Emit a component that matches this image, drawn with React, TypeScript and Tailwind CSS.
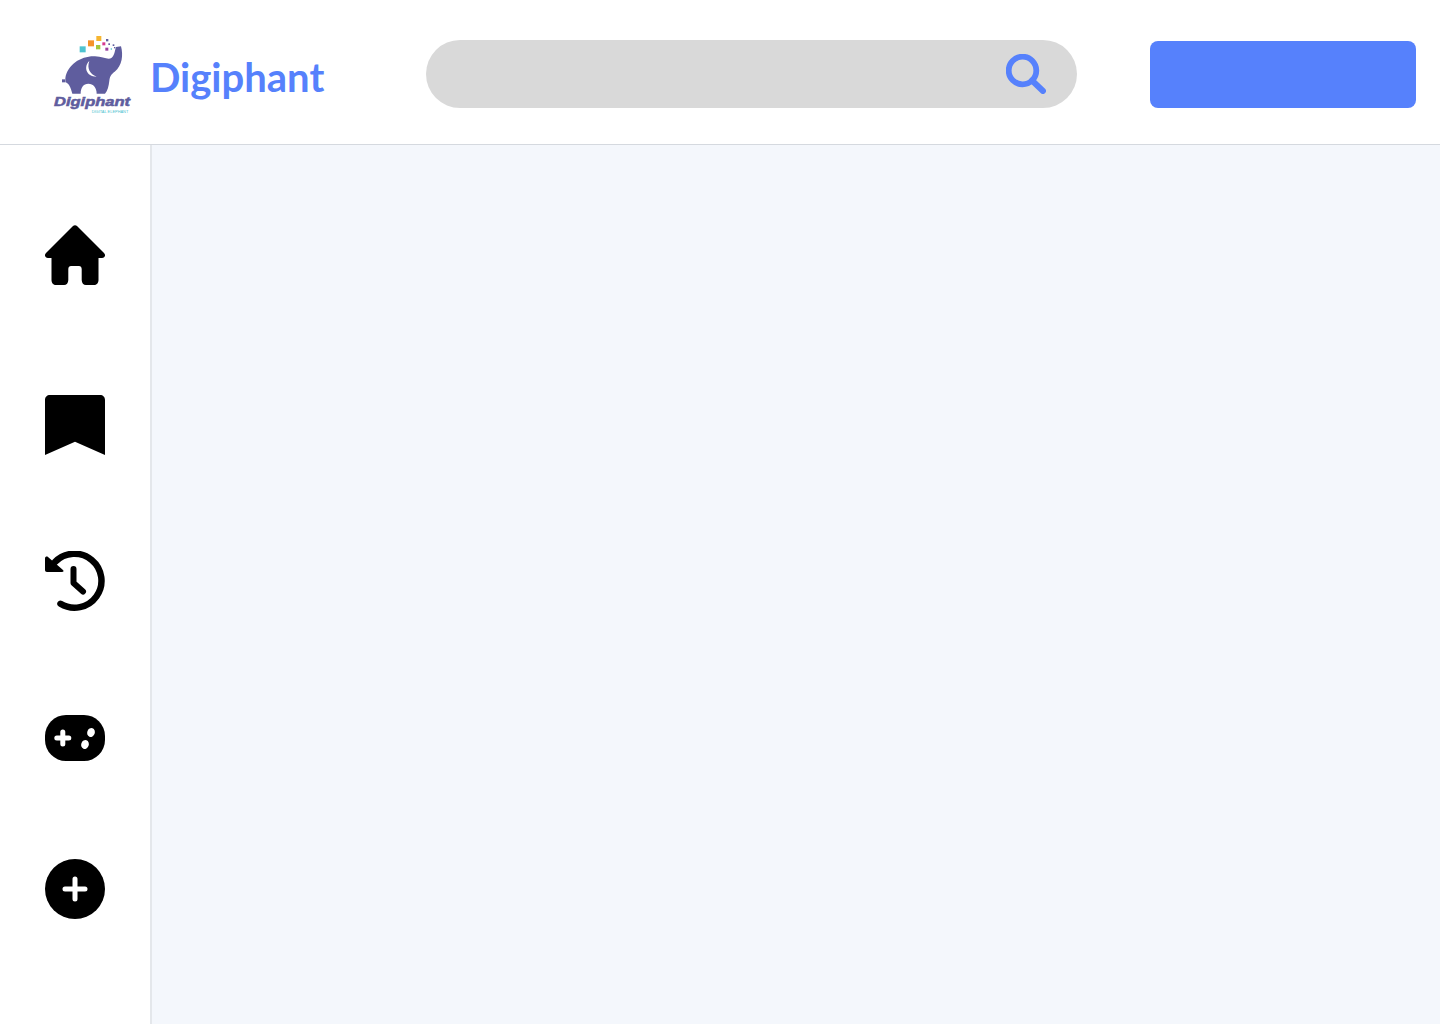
function Logo() {
  return (
    <svg viewBox="0 0 330 285" className="w-[110px] h-[95px] shrink-0">
      <rect x="119" y="64" width="18" height="18" fill="#4fc3d0" />
      <rect x="144" y="46" width="18" height="18" fill="#f5922a" />
      <rect x="169" y="33" width="15" height="15" fill="#f6b530" />
      <rect x="168" y="60" width="13" height="13" fill="#a5c63b" />
      <rect x="198" y="42" width="7" height="7" fill="#5f5d9e" />
      <rect x="187" y="52" width="9" height="9" fill="#d6398f" />
      <rect x="196" y="68" width="9" height="9" fill="#9b3fa0" />
      <rect x="205" y="55" width="5" height="5" fill="#5f5d9e" />
      <rect x="218" y="58" width="5" height="5" fill="#5f5d9e" />
      <rect x="212" y="70" width="4" height="4" fill="#4fc3d0" />
      <rect x="222" y="66" width="4" height="4" fill="#5f5d9e" />
      <rect x="66" y="163" width="9" height="9" fill="#5f5d9e" />
      <path
        d="M76 160C82 118 125 92 165 94C190 95 205 106 215 98C224 91 224 78 228 66L243 64C250 90 247 122 224 140C215 147 210 152 208 167C206 184 203 197 195 206L170 206C170 188 160 176 145 176C130 176 122 188 122 206L97 206C92 188 88 176 76 172Z"
        fill="#5f5d9e"
      />
      <path d="M148 108C130 125 138 155 170 155C150 148 140 130 148 108Z" fill="#ffffff" />
      <text
        x="42"
        y="242"
        textLength="228"
        lengthAdjust="spacingAndGlyphs"
        fontFamily="Liberation Sans, sans-serif"
        fontWeight="700"
        fontStyle="italic"
        fontSize="36"
        stroke="#5f5d9e"
        strokeWidth="1.5"
        fill="#5f5d9e"
      >
        Digiphant
      </text>
      <text
        x="155"
        y="263"
        textLength="110"
        lengthAdjust="spacingAndGlyphs"
        fontFamily="Liberation Sans, sans-serif"
        fontSize="8"
        fill="#4fc3d0"
      >
        DIGITAL ELEPHANT
      </text>
    </svg>
  );
}

function SearchIcon() {
  return (
    <svg viewBox="0 0 40 40" className="w-10 h-10" fill="none" stroke="#5681fc">
      <circle cx="16.500" cy="16.500" r="13.800" strokeWidth="5.800" />
      <path d="M26 26.500L37 37" strokeWidth="6" strokeLinecap="round" />
    </svg>
  );
}

function HomeIcon() {
  return (
    <svg viewBox="0 0 60 60" className="w-[60px] h-[60px] block">
      <path d="M28 1C29 0 31 0 32 1L59 28C61 30 60 33 57 33H53.500V55C53.500 58 51.500 60 49 60H41C38.500 60 36.700 58 36.700 55V44C36.700 42 35.500 41 34 41H26C24.500 41 23.300 42 23.300 44V55C23.300 58 21.500 60 19 60H11C8.500 60 6.500 58 6.500 55V33H3C0 33 -1 30 1 28Z" />
    </svg>
  );
}

function BookmarkIcon() {
  return (
    <svg viewBox="0 0 60 60" className="w-[60px] h-[60px] block">
      <path d="M5 0H55C58 0 60 2 60 5V60L30 46.700L0 60V5C0 2 2 0 5 0Z" />
    </svg>
  );
}

function HistoryIcon() {
  return (
    <svg viewBox="0 0 60 60" className="w-[60px] h-[60px] block">
      <path
        d="M10 11A27 27 0 1 1 15.500 52.800"
        fill="none"
        stroke="#000"
        strokeWidth="6.500"
        strokeLinecap="round"
      />
      <path d="M0 7.500C0 5.500 2 5 3 6L18 19C19 20 18.500 21 17 21H2C0.800 21 0 20 0 19Z" />
      <path
        d="M28.500 18V32L38 40.500"
        fill="none"
        stroke="#000"
        strokeWidth="6"
        strokeLinecap="round"
        strokeLinejoin="round"
      />
    </svg>
  );
}

function GamepadIcon() {
  return (
    <svg viewBox="0 0 60 60" className="w-[60px] h-[60px] block">
      <rect x="0" y="7" width="60" height="46" rx="21" />
      <path d="M17.800 24V36M11.800 30H23.800" stroke="#fff" strokeWidth="5" strokeLinecap="round" />
      <ellipse cx="46" cy="24.500" rx="3.800" ry="4.500" transform="rotate(20 46 24.500)" fill="#fff" />
      <ellipse cx="40" cy="36.500" rx="3.800" ry="4.500" transform="rotate(20 40 36.500)" fill="#fff" />
    </svg>
  );
}

function PlusIcon() {
  return (
    <svg viewBox="0 0 60 60" className="w-[60px] h-[60px] block">
      <circle cx="30" cy="30" r="30" />
      <path d="M30 20V40M20 30H40" stroke="#fff" strokeWidth="5" strokeLinecap="round" />
    </svg>
  );
}

export default function App() {
  return (
    <div className="h-[1024px] flex flex-col bg-white overflow-hidden font-['Lato',sans-serif]">
      <header className="h-[145px] shrink-0 flex items-start border-b border-[#d5d9df] bg-white">
        <div className="mt-[25px] ml-10">
          <Logo />
        </div>
        <h1 className="mt-[49px] text-[40px] leading-[56px] font-bold text-[#5681fc]">Digiphant</h1>
        <div className="ml-auto mt-10 w-[651px] h-[68px] rounded-full bg-[#d9d9d9] flex items-center justify-end pr-[31px]">
          <SearchIcon />
        </div>
        <div className="ml-[73px] mr-6 mt-[41px] w-[266px] h-[67px] rounded-lg bg-[#5681fc]"></div>
      </header>
      <div className="flex-1 flex">
        <nav className="w-[152px] shrink-0 border-r-2 border-[#e4e7eb] bg-white flex flex-col items-center pt-20">
          <HomeIcon />
          <div className="mt-[110px]">
            <BookmarkIcon />
          </div>
          <div className="mt-24">
            <HistoryIcon />
          </div>
          <div className="mt-[97px]">
            <GamepadIcon />
          </div>
          <div className="mt-[91px]">
            <PlusIcon />
          </div>
        </nav>
        <main className="flex-1 bg-[#f4f7fc]"></main>
      </div>
    </div>
  );
}
